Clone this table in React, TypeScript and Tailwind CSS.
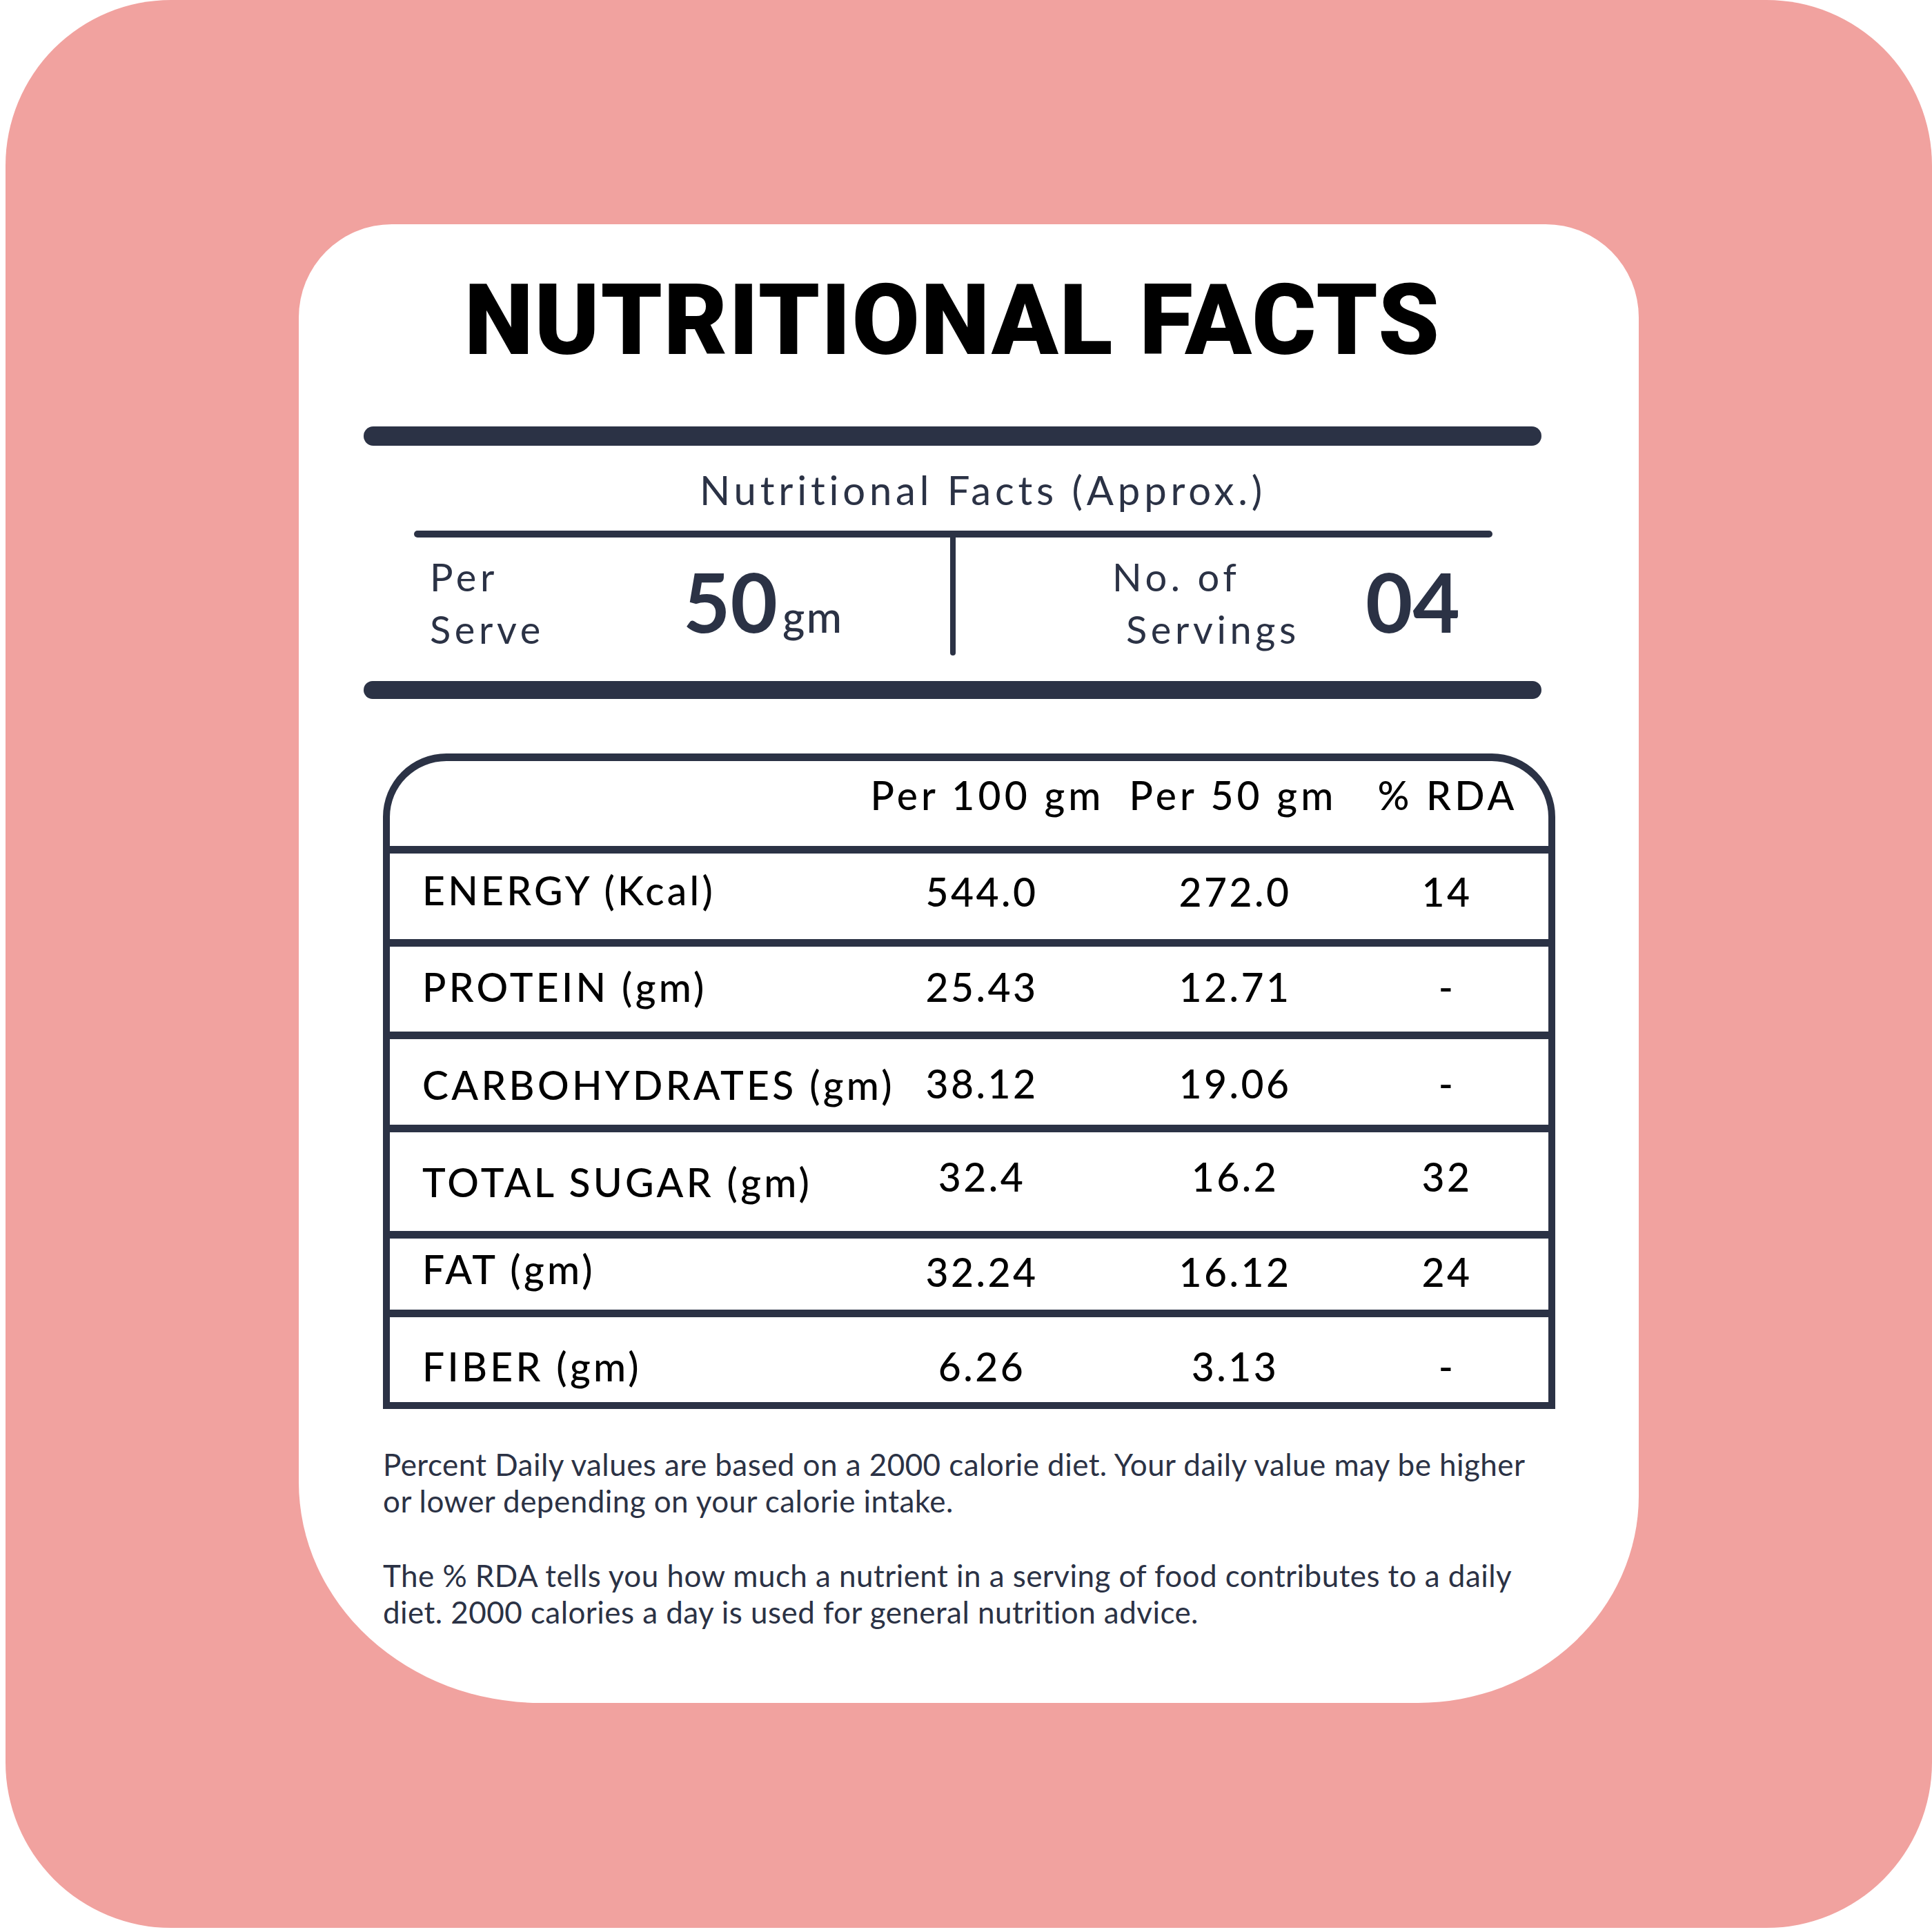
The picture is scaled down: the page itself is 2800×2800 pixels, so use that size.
const rows = [
  { label: 'ENERGY (Kcal)', per100: '544.0', per50: '272.0', rda: '14', h: 'h-[135px]', lp: 'pt-[19px]', np: 'pt-[21px]' },
  { label: 'PROTEIN (gm)', per100: '25.43', per50: '12.71', rda: '-', h: 'h-[134px]', lp: 'pt-[24px]', np: 'pt-[24px]' },
  { label: 'CARBOHYDRATES (gm)', per100: '38.12', per50: '19.06', rda: '-', h: 'h-[135px]', lp: 'pt-[32px]', np: 'pt-[30px]' },
  { label: 'TOTAL SUGAR (gm)', per100: '32.4', per50: '16.2', rda: '32', h: 'h-[154px]', lp: 'pt-[38px]', np: 'pt-[30px]' },
  { label: 'FAT (gm)', per100: '32.24', per50: '16.12', rda: '24', h: 'h-[114px]', lp: 'pt-[10px]', np: 'pt-[14px]' },
  { label: 'FIBER (gm)', per100: '6.26', per50: '3.13', rda: '-', h: 'h-[134px]', lp: 'pt-[37px]', np: 'pt-[37px]' },
];

function NutritionRow({ row }: { row: (typeof rows)[number] }) {
  return (
    <div className={`flex items-start border-t-[11px] border-[#2b3245] ${row.h}`}>
      <div className={`w-[675px] shrink-0 pl-[47px] whitespace-nowrap tracking-[0.075em] ${row.lp}`}>{row.label}</div>
      <div className={`w-[366px] shrink-0 text-center ${row.np}`}>{row.per100}</div>
      <div className={`w-[368px] shrink-0 text-center ${row.np}`}>{row.per50}</div>
      <div className={`w-[246px] shrink-0 text-center ${row.np}`}>{row.rda}</div>
    </div>
  );
}

export default function App() {
  return (
    <div className="w-[2800px] h-[2800px] bg-white">
      <div className="ml-[8px] w-[2792px] h-[2794px] rounded-[240px] bg-[#f1a29f] pt-[325px] pl-[425px]">
        <div className="w-[1942px] h-[2143px] bg-white rounded-tl-[135px] rounded-tr-[135px] rounded-bl-[350px_320px] rounded-br-[320px_300px] overflow-hidden">
          {/* heading + serving info */}
          <div className="ml-[94px] w-[1707px] pt-[69px]">
            <h1 className="text-center text-[142px] leading-none font-black tracking-[0.012em] text-black font-['Roboto',sans-serif]">
              NUTRITIONAL FACTS
            </h1>
            <div className="mt-[82px] h-[28px] rounded-full bg-[#2b3245]" />
            <p className="mt-[35px] pl-[88px] text-center text-[58px] leading-none text-[#2b3245] font-['Lato',sans-serif] tracking-[0.1em]">
              Nutritional Facts (Approx.)
            </p>
            <div className="ml-[73px] w-[1563px] mt-[30px]">
              <div className="h-[10px] rounded-full bg-[#2b3245]" />
              <div className="flex h-[171px] font-['Lato',sans-serif] text-[#2b3245]">
                <div className="w-[777px] flex items-start pl-[23px]">
                  <div className="w-[367px] pt-[19px] text-[56px] leading-[76px] tracking-[0.1em]">
                    <div>Per</div>
                    <div>Serve</div>
                  </div>
                  <div className="flex items-baseline pt-[34px]">
                    <span className="text-[118px] leading-none font-bold">50</span>
                    <span className="ml-[7px] text-[62px] leading-none font-medium tracking-[0.04em]">gm</span>
                  </div>
                </div>
                <div className="w-[8px] h-full bg-[#2b3245] rounded-b-full" />
                <div className="w-[778px] flex items-start pl-[227px]">
                  <div className="w-[367px] pt-[19px] text-[56px] leading-[76px] tracking-[0.1em]">
                    <div>No. of</div>
                    <div className="pl-[20px]">Servings</div>
                  </div>
                  <div className="pt-[34px]">
                    <span className="text-[118px] leading-none font-bold">04</span>
                  </div>
                </div>
              </div>
            </div>
            <div className="mt-[37px] h-[26px] rounded-full bg-[#2b3245]" />
          </div>

          {/* nutrient table */}
          <div className="ml-[122px] w-[1699px] mt-[79px] border-[10px] border-t-[11px] border-[#2b3245] rounded-t-[92px] font-['Lato',sans-serif] text-[57px] leading-[1.2] text-black tracking-[0.06em] font-medium">
            <div className="flex items-start h-[123px] pt-[15px] tracking-[0.09em] whitespace-nowrap">
              <div className="w-[675px] shrink-0" />
              <div className="w-[382px] shrink-0 text-center">Per 100 gm</div>
              <div className="w-[330px] shrink-0 text-center">Per 50 gm</div>
              <div className="w-[292px] shrink-0 text-center">% RDA</div>
            </div>
            {rows.map((row) => (
              <NutritionRow key={row.label} row={row} />
            ))}
          </div>

          {/* notes */}
          <div className="ml-[122px] mt-[54px] w-[1760px] text-[44px] leading-[53px] tracking-[0.01em] text-[#2b3245] font-['Lato',sans-serif]">
            <p>
              Percent Daily values are based on a 2000 calorie diet. Your daily value may be higher
              <br />
              or lower depending on your calorie intake.
            </p>
            <p className="mt-[55px]">
              The % RDA tells you how much a nutrient in a serving of food contributes to a daily
              <br />
              diet. 2000 calories a day is used for general nutrition advice.
            </p>
          </div>
        </div>
      </div>
    </div>
  );
}
